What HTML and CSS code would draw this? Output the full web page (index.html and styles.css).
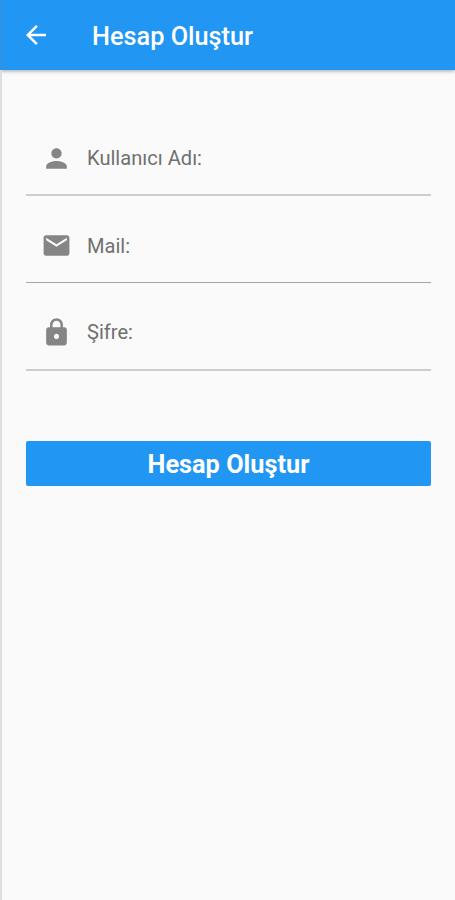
FILE: index.html
```
<!DOCTYPE html>
<html lang="tr">
<head>
    <meta charset="UTF-8">
    <meta name="viewport" content="width=device-width, initial-scale=1.0">
    <title>Hesap Oluştur</title>
    <link rel="stylesheet" href="styles.css">
</head>
<body>
    <div class="header">
        <a href="#" class="back">
            <svg class="icon" viewBox="0 0 24 24"><path d="M20 11H7.83l5.59-5.59L12 4l-8 8 8 8 1.41-1.41L7.83 13H20v-2z"/></svg>
        </a>
        <div class="header-title">Hesap Oluştur</div>
    </div>
    <form class="register">
        <label class="register-input">
            <svg class="icon" viewBox="0 0 24 24"><path d="M12 12c2.21 0 4-1.79 4-4s-1.79-4-4-4-4 1.79-4 4 1.79 4 4 4zm0 2c-2.67 0-8 1.34-8 4v2h16v-2c0-2.66-5.33-4-8-4z"/></svg>
            <input type="text" placeholder="Kullanıcı Adı:" name="username" class="list-input">
        </label>
        <label class="register-input line-dark">
            <svg class="icon" viewBox="0 0 24 24"><path d="M20 4H4c-1.1 0-1.99.9-1.99 2L2 18c0 1.1.9 2 2 2h16c1.1 0 2-.9 2-2V6c0-1.1-.9-2-2-2zm0 4l-8 5-8-5V6l8 5 8-5v2z"/></svg>
            <input type="text" placeholder="Mail:" name="mail" class="list-input">
        </label>
        <label class="register-input">
            <svg class="icon" viewBox="0 0 24 24"><path d="M18 8h-1V6c0-2.76-2.24-5-5-5S7 3.24 7 6v2H6c-1.1 0-2 .9-2 2v10c0 1.1.9 2 2 2h12c1.1 0 2-.9 2-2V10c0-1.1-.9-2-2-2zm-6 9c-1.1 0-2-.9-2-2s.9-2 2-2 2 .9 2 2-.9 2-2 2zm3.1-9H8.9V6c0-1.71 1.39-3.1 3.1-3.1 1.71 0 3.1 1.39 3.1 3.1v2z"/></svg>
            <input type="password" placeholder="Şifre:" name="password" class="list-input">
        </label>
        <button type="button" class="register-button">Hesap Oluştur</button>
    </form>
</body>
</html>
```
FILE: styles.css
```
* {
    box-sizing: border-box;
}
body {
    margin: 0;
    background: #fafafa;
    font-family: Roboto, "Liberation Sans", sans-serif;
}
.icon {
    display: block;
    flex: none;
    width: 31px;
    height: 31px;
    fill: #858585;
}
.header {
    display: flex;
    align-items: center;
    height: 70px;
    padding-left: 20px;
    background: #2196f3;
    border-left: 1px solid #3d8fd2;
    box-shadow: 0 1px 4px rgba(0, 0, 0, 0.35);
}
.back .icon {
    width: 30px;
    height: 30px;
    fill: #fff;
}
.header-title {
    margin: 2px 0 0 41px;
    color: #fff;
    font-size: 25.3px;
    font-weight: 500;
}
.register {
    height: 830px;
    padding: 39px 24px 0 24px;
    border-left: 2px solid #dedede;
}
.register-input {
    display: flex;
    align-items: center;
    height: 87px;
    padding: 13px 0 0 15px;
    border-bottom: 2px solid #cdcdcd;
}
.register-input + .register-input {
    height: 88px;
}
.register-input.line-dark + .register-input {
    padding-top: 12px;
}
.register .line-dark.register-input {
    height: 87px;
    border-bottom: 1px solid #a6a6a6;
}
.list-input {
    flex: 1;
    min-width: 0;
    margin-left: 15px;
    padding: 0;
    border: 0;
    outline: none;
    background: none;
    font-family: inherit;
    font-size: 20.1px;
}
.list-input::placeholder {
    color: #707070;
}
.register-button {
    display: block;
    width: 100%;
    height: 45px;
    margin-top: 70px;
    padding: 2px 0 0 0;
    border: 0;
    border-radius: 2px;
    background: #2196f3;
    color: #fff;
    font-family: inherit;
    font-size: 25.3px;
    font-weight: 700;
}
```
